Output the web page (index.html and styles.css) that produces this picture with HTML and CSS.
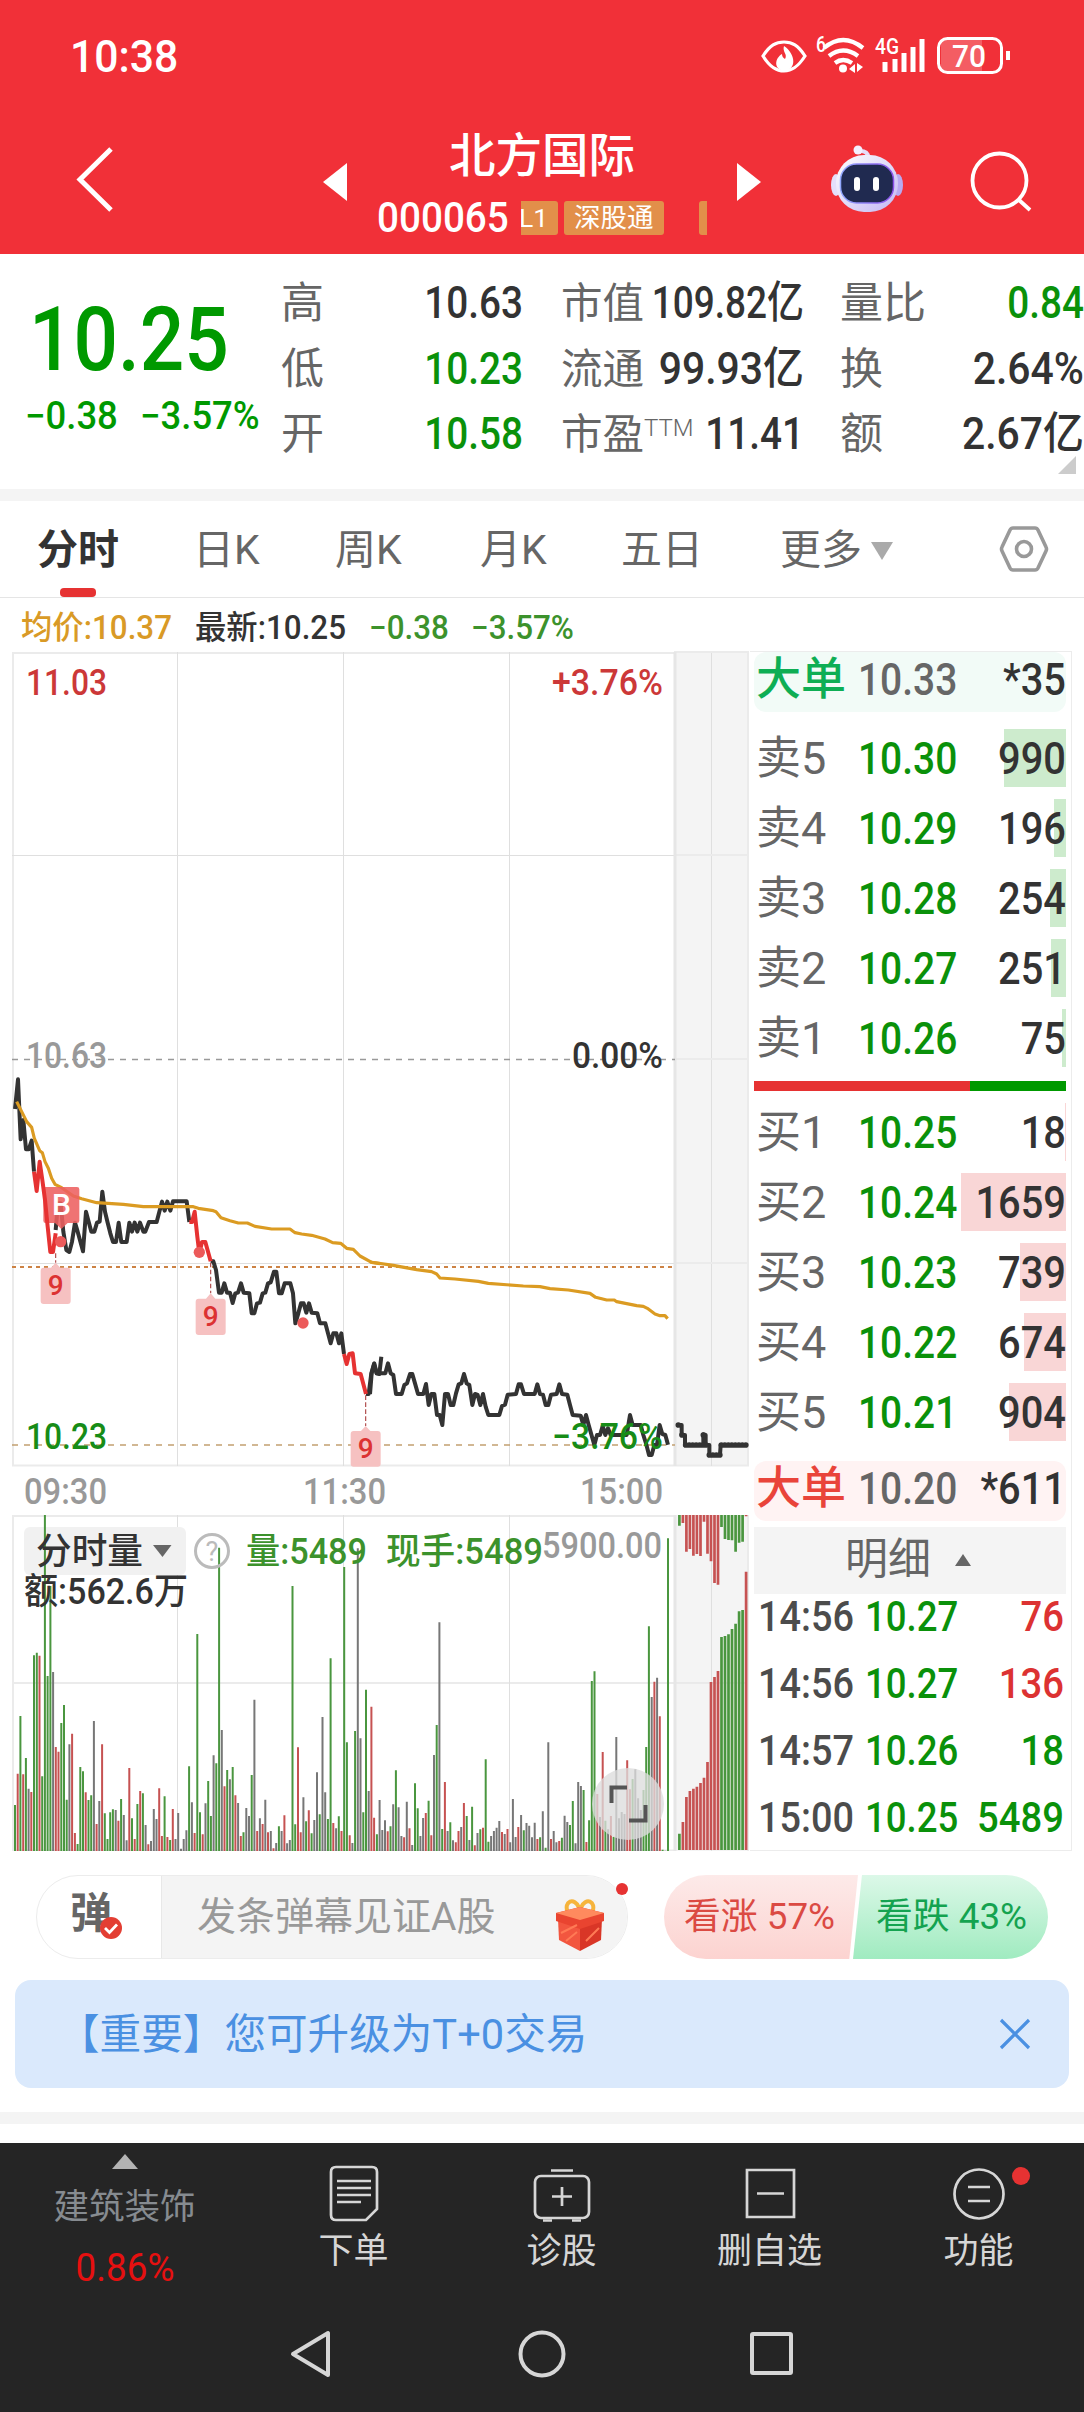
FILE: index.html
```html
<!DOCTYPE html>
<html lang="zh-CN">
<head>
<meta charset="utf-8">
<title>北方国际 000065</title>
<link rel="stylesheet" href="styles.css">
</head>
<body>
<header class="top">
  <div class="status">
    <span class="clock n">10:38</span>
    <svg class="status-icons" width="252" height="48" viewBox="760 32 252 48">
      <path d="M763 56C770 45 776 42 784 42s14 3 21 14c-7 11-13 15-21 15s-14-4-21-15z" fill="none" stroke="#fff" stroke-width="3.2"/>
      <path d="M784 46c-2 6 4 8 1 13-2-1-3-3-3-5-7 4-9 15 2 17 13-1 12-17 0-25z" fill="#fff"/>
      <text x="816" y="52" class="s-small" textLength="10" lengthAdjust="spacingAndGlyphs">6</text>
      <g fill="none" stroke="#fff" stroke-width="4.2"><path d="M824 48q19-16 39 0"/><path d="M829 56q14-11 29 0"/><path d="M835 63q8-6 17 0"/></g>
      <circle cx="843" cy="68.500" r="4" fill="#fff"/><path d="M855 64v9l-6-4zM857 63v9l6-5z" fill="#fff"/>
      <text x="875" y="54" class="s-small" textLength="24" lengthAdjust="spacingAndGlyphs">4G</text>
      <path d="M885 62v10M895 59v13M904 53v19M913 47v25M922 39v33" stroke="#fff" stroke-width="5"/>
      <rect x="941" y="40" width="41" height="31" fill="#fff" opacity=".22"/>
      <rect x="938.500" y="38.500" width="63" height="34" rx="9" fill="none" stroke="#fff" stroke-width="3"/>
      <path d="M1008 51v9" stroke="#fff" stroke-width="4"/>
      <text x="952" y="67" class="s-batt" textLength="34" lengthAdjust="spacingAndGlyphs">70</text>
    </svg>
  </div>
  <div class="titlebar">
    <svg class="back" width="48" height="80" viewBox="70 140 48 80"><path d="M111 149 80 179.500 111 210" fill="none" stroke="#fff" stroke-width="5"/></svg>
    <svg class="prev" width="24" height="38" viewBox="0 0 24 38"><path d="M0 19 24 0V38z" fill="#fff"/></svg>
    <div class="stock">
      <h1>北方国际</h1>
      <div class="code"><span class="n codenum">000065</span><span class="tags"><i class="tag cut">L1</i><i class="tag">深股通</i><i class="tag last"></i></span></div>
    </div>
    <svg class="next" width="24" height="38" viewBox="0 0 24 38"><path d="M24 19 0 0V38z" fill="#fff"/></svg>
    <svg class="robot" width="76" height="70" viewBox="827 144 76 70">
      <defs><linearGradient id="shell" x2="1" y2="1"><stop stop-color="#fff"/><stop offset="1" stop-color="#c3b8f3"/></linearGradient><linearGradient id="rim"><stop stop-color="#92a9ff"/><stop offset="1" stop-color="#8b51e9"/></linearGradient></defs>
      <path d="M866 157q0-6-8-6" fill="none" stroke="#e6ddfa" stroke-width="4"/><circle cx="856" cy="150" r="4.500" fill="#f4f0ff"/>
      <ellipse cx="834" cy="185" rx="5" ry="11" fill="#e4dffb"/><ellipse cx="896" cy="185" rx="5" ry="11" fill="#b8aaf0"/>
      <rect x="834" y="155" width="62" height="57" rx="28" fill="url(#shell)"/>
      <rect x="838.500" y="164" width="53" height="39" rx="16" fill="#202a50" stroke="url(#rim)" stroke-width="1.500"/>
      <rect x="852" y="177" width="6" height="14" rx="3" fill="#fff"/><rect x="871" y="177" width="6" height="14" rx="3" fill="#fff"/>
    </svg>
    <svg class="search" width="66" height="66" viewBox="967 148 66 66"><g fill="none" stroke="#fff" stroke-width="3.800"><circle cx="998.500" cy="180.500" r="27"/><path d="m1018 200 11 10"/></g></svg>
  </div>
</header>

<section class="summary">
  <div class="quote">
    <div class="last n">10.25</div>
    <div class="chg"><span class="n">−0.38</span><span class="n">−3.57%</span></div>
  </div>
  <dl class="facts">
    <dt>高</dt><dd>10.63</dd><dt class="c2">市值</dt><dd class="w7">109.82<b>亿</b></dd><dt>量比</dt><dd class="down">0.84</dd>
    <dt>低</dt><dd class="down">10.23</dd><dt class="c2">流通</dt><dd class="w6">99.93<b>亿</b></dd><dt>换</dt><dd class="w6">2.64%</dd>
    <dt>开</dt><dd class="down">10.58</dd><dt class="c2">市盈<sup>TTM</sup></dt><dd>11.41</dd><dt>额</dt><dd class="w6">2.67<b>亿</b></dd>
  </dl>
  <i class="corner"></i>
</section>

<nav class="tabs">
  <span class="on">分时</span><span>日K</span><span>周K</span><span>月K</span><span>五日</span><span class="more">更多<i></i></span>
  <svg width="50" height="50" viewBox="0 0 50 50"><path d="M14 4h22q2 0 3 2l8 17q1 2 0 4l-8 17q-1 2-3 2H14q-2 0-3-2L3 27q-1-2 0-4L11 6q1-2 3-2z" fill="none" stroke="#999" stroke-width="3.600"/><circle cx="25" cy="25" r="7.500" fill="none" stroke="#999" stroke-width="3.600"/></svg>
</nav>
<div class="legend"><span class="avg">均价:10.37</span><span class="now">最新:10.25</span><span class="d1">−0.38</span><span class="d2">−3.57%</span></div>

<main class="market">
  <svg class="chart" width="750" height="1200" viewBox="0 651 750 1200">
    <rect x="675" y="652" width="74" height="814" fill="#f4f4f4"/><rect x="675" y="1515" width="74" height="336" fill="#f4f4f4"/>
    <g class="grid">
      <path d="M12 653H675M12 1465.500H749M12 1516H675M12 1683H675M12 1850.500H675M13 652V1466M13 1515V1851"/>
      <path class="thin" d="M12 855.500H675M12 1263.500H675M177.500 652V1466M343.500 652V1466M509.500 652V1466M177.500 1515V1851M343.500 1515V1851M509.500 1515V1851M711.500 652V1466M711.500 1515V1851M675 1683H749"/>
      <path d="M674 652H749M675 855H749M675 1059H749M675 1263H749M748 652V1466M748 1515V1851"/>
      <path class="edge" d="M675 652V1466M675 1515V1851"/>
    </g>
    <path class="zero" d="M12 1059.500H675"/><path class="cost" d="M12 1267H675"/><path class="floor" d="M12 1445H675"/>
    <text class="lab up" x="26" y="695" textLength="81">11.03</text>
    <text class="lab up" x="552" y="695" textLength="111">+3.76%</text>
    <text class="lab mute" x="26" y="1068" textLength="81">10.63</text>
    <text class="lab dark" x="572" y="1068" textLength="91">0.00%</text>
    <g transform="translate(0 1040) scale(.33333)">
      <polyline class="price" points="45,207 54,118 62,298 70,240 78,328 86,328 95,302 102,395"/>
      <polyline class="price" points="167,570 174,490 182,490 190,575 199,630 208,636 216,605 225,548 233,575 249,634 258,515 266,545 274,575 283,575 291,548 299,545 307,455 315,515 323,548 331,580 339,606 348,606 356,548 364,606 380,606 388,548 396,575 404,548 412,575 420,548 430,575 436,575 447,546 470,546 478,515 486,485 494,512 502,485 511,512 519,484 560,484 568,546"/>
      <polyline class="price" points="632,664 640,664 648,690 657,758 665,758 673,730 681,758 690,758 698,789 706,760 714,758 723,730 731,758 748,760 755,820 763,820 771,790 780,788 788,760 796,758 804,730 812,727 822,695 829,695 837,760 845,760 854,730 871,730 879,760 886,850 895,820 903,790 911,790 919,818 927,790 935,818 952,820 960,850 976,850 984,880 992,910 1000,880 1009,880 1017,910 1024,880 1032,942"/>
      <polyline class="price" points="1098,1062 1106,1062 1114,1000 1122,972 1130,1000 1138,1002 1144,950"/>
      <polyline class="average" points="50,185 65,215 80,245 95,262 103,295 119,332 127,338 135,365 145,385 155,415 165,433 185,443 220,468 245,476 290,488 370,493 430,500 580,500 595,505 640,512 648,515 663,533 690,542 715,549 742,549 765,559 815,567 870,567 885,578 905,582 935,586 975,597 998,608 1022,610 1040,625 1060,628 1080,648 1115,667 1140,671"/>
      <path class="buy" d="M137 441H231q7 0 7 7V542q0 7-7 7H203L184 567 165 549H137q-7 0-7-7V448q0-7 7-7z"/>
      <polyline class="price hot" points="102,395 110,453 119,365 127,420 135,480 143,560 151,636 159,636 167,580"/>
      <polyline class="price hot" points="568,546 576,546 584,515 592,590 598,640 606,606 616,606 632,664"/>
      <polyline class="price hot" points="1032,942 1040,972 1048,942 1058,940 1065,1000 1082,1002 1098,1062"/>
      <g fill="#ec5a5a"><circle cx="182" cy="605" r="17"/><circle cx="598" cy="637" r="17"/><circle cx="909" cy="849" r="17"/></g>
      <path class="drop" d="M167 640V668M632 668V760M1097 1066V1158"/>
      <g class="flag"><path d="M131 683H153L167 668 181 683H203q9 0 9 9V783q0 9-9 9H131q-9 0-9-9V692q0-9 9-9z"/><path d="M596 776H618L632 760 646 776H668q9 0 9 9V876q0 9-9 9H596q-9 0-9-9V785q0-9 9-9z"/><path d="M1061 1173H1083L1097 1158 1111 1173H1133q9 0 9 9V1271q0 9-9 9H1061q-9 0-9-9V1182q0-9 9-9z"/></g>
    </g>
    <g transform="translate(370 1150) scale(.33333)">
      <polyline class="price" points="0,732 5,670 13,640 20,670 46,670 54,640 62,670 70,675 78,732 95,732 103,705 111,700 120,672 127,672 135,700 144,732 160,732 168,702 176,765 184,732 193,732 201,795 209,795 217,825 225,732 234,732 242,765 250,765 258,730 266,703 274,700 282,672 290,700 298,705 307,765 315,732 323,735 331,765 339,732 347,770 355,795 388,795 396,768 405,764 413,734 438,732 446,703 453,703 462,732 494,732 502,703 510,732 519,734 527,765 535,765 543,734 560,732 568,703 576,732 592,734 600,765 608,795 632,797 640,825 648,795 656,825 673,885 681,855 690,855 698,828 706,855 714,835 722,855 770,855 780,795 788,825 812,825 820,855 828,880 837,915 845,915 853,885 861,885 869,825 877,852 886,855 894,884"/>
      <polyline class="average" points="0,336 70,346 90,350 140,359 185,365 200,372 210,384 255,387 325,394 355,400 460,408 510,410 540,416 595,420 660,430 677,442 710,450 733,450 740,455 800,467 820,469 832,475 855,492 870,497 885,497 893,506"/>
      <polyline class="price" points="925,825 935,825 935,855 945,855 945,885 1000,885 1000,853 1007,855 1007,885 1018,885 1018,915 1050,915 1052,885 1133,885"/>
      <path class="dots" d="M925 825h5M936 855h5M947 885h55M1000 855h5M1008 885h5M1018 915h34M1054 885h78"/>
    </g>
    <text class="flagn" x="55.700" y="1295">9</text><text class="flagn" x="210.700" y="1326">9</text><text class="flagn" x="365.700" y="1458">9</text>
    <text class="buyn" x="61.500" y="1215">B</text>
    <text class="lab down" x="26" y="1448.500" textLength="81">10.23</text>
    <text class="lab down" x="552" y="1448.500" textLength="111">−3.76%</text>
    <g class="axis"><text class="lab mute" x="24" y="1504" textLength="83">09:30</text><text class="lab mute" x="303" y="1504" textLength="83">11:30</text><text class="lab mute" x="580" y="1504" textLength="83">15:00</text></g>
    <rect x="24" y="1527" width="162" height="48" rx="6" fill="#f1f1f1"/>
    <g class="vol"></g>
    <text class="lab dark cjk" x="36" y="1564" textLength="107">分时量</text><path d="M153 1545h18.500l-9 12z" fill="#666"/>
    <circle cx="212" cy="1551" r="16.500" fill="none" stroke="#bbb" stroke-width="3"/><text class="ask" x="212" y="1561">?</text>
    <text class="lab leaf" x="246" y="1564" textLength="121">量:5489</text><text class="lab leaf" x="386" y="1564" textLength="157">现手:5489</text>
    <text class="lab mute" x="542" y="1558" textLength="120">5900.00</text>
    <text class="lab dark" x="24" y="1604" textLength="164">额:562.6万</text>
    <circle cx="628" cy="1804" r="36" fill="#dcdcdc" fill-opacity=".78"/>
    <path d="M611.500 1803V1787.500H627M645.500 1805V1820.500H629" fill="none" stroke="#555" stroke-width="4"/>
  </svg>

  <aside class="book">
    <div class="big green"><span>大单</span><em>10.33</em><strong>*35</strong></div>
    <div class="levels">
      <div class="lv"><span>卖5</span><em>10.30</em><strong>990</strong><i style="width:62px"></i></div>
      <div class="lv"><span>卖4</span><em>10.29</em><strong>196</strong><i style="width:12px"></i></div>
      <div class="lv"><span>卖3</span><em>10.28</em><strong>254</strong><i style="width:16px"></i></div>
      <div class="lv"><span>卖2</span><em>10.27</em><strong>251</strong><i style="width:15px"></i></div>
      <div class="lv"><span>卖1</span><em>10.26</em><strong>75</strong><i style="width:4px"></i></div>
    </div>
    <div class="ratio"></div>
    <div class="levels bid">
      <div class="lv"><span>买1</span><em>10.25</em><strong>18</strong><i style="width:1px"></i></div>
      <div class="lv"><span>买2</span><em>10.24</em><strong>1659</strong><i style="width:105px"></i></div>
      <div class="lv"><span>买3</span><em>10.23</em><strong>739</strong><i style="width:46px"></i></div>
      <div class="lv"><span>买4</span><em>10.22</em><strong>674</strong><i style="width:42px"></i></div>
      <div class="lv"><span>买5</span><em>10.21</em><strong>904</strong><i style="width:57px"></i></div>
    </div>
    <div class="big red"><span>大单</span><em>10.20</em><strong>*611</strong></div>
    <div class="detail">明细<i></i></div>
    <div class="ticks">
      <div><span>14:56</span><em>10.27</em><strong class="up">76</strong></div>
      <div><span>14:56</span><em>10.27</em><strong class="up">136</strong></div>
      <div><span>14:57</span><em>10.26</em><strong>18</strong></div>
      <div><span>15:00</span><em>10.25</em><strong>5489</strong></div>
    </div>
  </aside>
</main>

<section class="social">
  <div class="danmu">
    <div class="toggle">弹<svg width="24" height="24" viewBox="0 0 24 24"><circle cx="12" cy="12" r="11" fill="#e33e33"/><path d="m6 12 4.500 4.500L18 8.500" fill="none" stroke="#fff" stroke-width="2.800"/></svg></div>
    <div class="field"><span>发条弹幕见证A股</span>
      <svg class="gift" width="52" height="54" viewBox="554 1899 52 54">
        <g fill="none" stroke="#f6b43c" stroke-width="4"><ellipse cx="573" cy="1909" rx="6" ry="8" transform="rotate(-22 573 1909)"/><ellipse cx="587" cy="1909" rx="6" ry="8" transform="rotate(22 587 1909)"/></g>
        <path d="M558 1919 580 1928V1951L559 1940z" fill="#f2563f"/><path d="M602 1919 580 1928V1951L601 1940z" fill="#d93627"/>
        <path d="M556 1913 580 1907 604 1913V1921L580 1929 556 1921z" fill="#e94430"/><path d="m556 1913 24-6 24 6-24 7z" fill="#ff8a5e"/><path d="m561 1933 16-8M566 1941l11-9M586 1941l13-13" stroke="#ff7a55" stroke-width="2"/>
      </svg>
    </div>
    <i class="reddot"></i>
  </div>
  <div class="vote"><span class="bull">看涨 57%</span><span class="bear">看跌 43%</span></div>
</section>

<section class="notice"><span>【重要】您可升级为T+0交易</span><svg width="32" height="32" viewBox="0 0 32 32"><path d="m2 2 28 28M30 2 2 30" stroke="#4a90e2" stroke-width="3.200"/></svg></section>
<div class="strip"></div>

<footer class="bottom">
  <div class="menu">
    <div class="sector"><i></i><span>建筑装饰</span><b class="n">0.86%</b></div>
    <div class="item"><svg width="60" height="60" viewBox="0 0 60 60"><path d="M12 4H48q5 0 5 5V46L42 57H12q-5 0-5-5V9q0-5 5-5zM13 18H47M13 25H47M13 32H47M13 39H37"/></svg>下单</div>
    <div class="item"><svg width="60" height="60" viewBox="0 0 60 60"><rect x="3" y="13" width="54" height="42" rx="6"/><path d="M19 7.500H41M30 24V43M20 33.500H40M11 57.500H20M40 57.500H49"/></svg>诊股</div>
    <div class="item"><svg width="60" height="60" viewBox="0 0 60 60"><path d="M7 7H54V54H7zM17 30.500H44"/></svg>删自选</div>
    <div class="item"><svg width="60" height="60" viewBox="0 0 60 60"><circle cx="30" cy="31" r="24.500"/><path d="M19 24H41M19 38H41"/></svg>功能<i class="reddot"></i></div>
  </div>
  <div class="system">
    <svg width="46" height="50" viewBox="0 0 46 50"><path d="M42 4V46L7 25z" stroke-linejoin="round"/></svg>
    <svg width="50" height="50" viewBox="0 0 50 50"><circle cx="25" cy="25" r="21.500"/></svg>
    <svg width="46" height="50" viewBox="0 0 46 50"><rect x="5" y="5" width="39" height="39" rx="1"/></svg>
  </div>
</footer>
<script src="chart.js"></script>
</body>
</html>
```
FILE: styles.css
```css
* { box-sizing: border-box; }
body { margin: 0; width: 1084px; height: 2412px; overflow: hidden; background: #fff; color: #333; font-family: Roboto, "Noto Sans CJK SC", sans-serif; }
h1, dl, dd, dt { margin: 0; }
i, em { font-style: normal; }
svg { display: block; flex: none; }
.n { display: inline-block; transform: scaleX(.9); transform-origin: 0 50%; font-weight: 500; white-space: nowrap; }

.top { height: 254px; background: #f13038; color: #fff; }
.status { height: 110px; padding: 32px 72px 0 70px; display: flex; justify-content: space-between; align-items: flex-start; }
.clock { font-size: 44px; line-height: 51px; transform: scaleX(.97); }
.s-small { font: 500 22px Roboto; fill: #fff; }
.s-batt { font: 500 31px Roboto; fill: #fff; }
.titlebar { height: 144px; display: grid; grid-template-columns: 253px 24px 390px 24px 68px 76px 63px 66px; padding-left: 70px; }
.back { margin-top: 30px; }
.prev, .next { margin-top: 53px; }
.robot { margin-top: 34px; }
.search { margin-top: 38px; }
.next { grid-column: 4; }
.robot { grid-column: 6; }
.search { grid-column: 8; }
.stock { display: flex; flex-direction: column; align-items: center; }
h1 { font-size: 46.500px; font-weight: 500; line-height: 60px; margin-top: 16px; white-space: nowrap; }
.code { width: 330px; height: 40px; margin-top: 12px; display: flex; align-items: center; }
.codenum { font-size: 42px; line-height: 42px; width: 144px; transform: scaleX(.92); }
.tags { width: 186px; height: 34px; display: flex; gap: 6px; overflow: hidden; }
.tag { background: #e28f4a; color: #fff; font-size: 26.500px; line-height: 34px; padding: 0 10px; border-radius: 3px; flex: none; height: 34px; }
.cut { width: 37px; padding: 0; text-indent: -2px; border-radius: 0 3px 3px 0; }
.last.tag { margin-left: 29px; width: 20px; }

.summary { height: 247px; border-bottom: 12px solid #f4f4f4; display: flex; position: relative; }
.quote { width: 281px; padding-left: 29px; color: #090; flex: none; }
.quote .last { font-size: 89px; line-height: 100px; margin-top: 36px; transform: scaleX(.88); }
.chg { display: flex; margin: 1px 0 0 -4px; font-size: 38px; line-height: 50px; }
.chg span { width: 115px; transform: scaleX(.96); }
.facts { display: grid; grid-template-columns: 94px 148px 38px 84px 159px 36px 100px 144px; grid-auto-rows: 65.500px; margin-top: 17px; font-size: 43px; line-height: 65px; white-space: nowrap; width: 803px; flex: none; }
.facts dt { color: #666; }
.facts dt:nth-of-type(3n+2) { grid-column: 4; }
.facts dt:nth-of-type(3n) { grid-column: 7; }
.facts dd { text-align: right; font-weight: 500; transform: scaleX(.88); transform-origin: 100% 50%; font-size: 44px; color: #333; }
.facts dd b { font-weight: 500; }
.facts .w7 { transform: scaleX(.84); display: flex; justify-content: flex-end; }
.facts .w6 { transform: scaleX(.93); display: flex; justify-content: flex-end; }
.facts .down { color: #0a910a; }
.facts .c2 { font-size: 41.500px; }
sup { font-size: 24px; font-weight: 300; line-height: 0; vertical-align: 13px; }
.corner { position: absolute; left: 1058px; top: 202px; border: 9px solid; border-color: transparent #ccc #ccc transparent; }

.tabs { height: 97px; border-bottom: 1.500px solid #e5e5e5; position: relative; display: grid; grid-template-columns: 156px 142px 145px 141px 159px 220px 50px; padding: 2px 0 0 37px; align-items: center; font-size: 41px; line-height: 60px; color: #666; white-space: nowrap; }
.tabs .on { color: #333; font-weight: 700; position: relative; }
.tabs .on::after { content: ""; position: absolute; left: 23px; top: 68px; width: 36px; height: 9px; border-radius: 4px; background: #e63232; }
.more i { display: inline-block; border: 11px solid transparent; border-top: 18px solid #aaa; border-bottom: 0; margin-left: 9px; vertical-align: 4px; }
.tabs svg { margin: -2px 0 0 -1px; }
.legend { height: 53px; display: grid; grid-template-columns: 174px 174px 102px 120px; padding-left: 21px; font-size: 32.500px; line-height: 60px; white-space: nowrap; }
.legend span { transform: scaleX(.965); transform-origin: 0 50%; font-weight: 500; }
.avg { color: #d99a26; } .now { color: #333; } .d1, .d2 { color: #3c922c; }

.market { display: flex; height: 1200px; }
.chart { width: 750px; }
.grid path { fill: none; stroke: #ebebeb; stroke-width: 2; }
.grid .thin { stroke: #dfdfdf; stroke-width: 1; }
.grid .edge { stroke: #e6e6e6; stroke-width: 3; }
.zero { stroke: #999; stroke-width: 1.700; stroke-dasharray: 6 6; }
.cost { stroke: #cc8244; stroke-width: 2; stroke-dasharray: 4 4; }
.floor { stroke: #c2a070; stroke-width: 1.700; stroke-dasharray: 6 6; }
.price { fill: none; stroke: #333; stroke-width: 12; stroke-linejoin: round; stroke-linecap: butt; }
.hot { stroke: #e63232; }
.average { fill: none; stroke: #db9b22; stroke-width: 9.500; stroke-linejoin: round; }
.dots { stroke: #333; stroke-width: 17; stroke-linecap: round; stroke-dasharray: 0 10.500; fill: none; }
.buy { fill: #ed6060; fill-opacity: .88; }
.drop { stroke: #b04a4a; stroke-width: 3.500; stroke-dasharray: 14 7; fill: none; }
.flag { fill: #f6c1c1; }
.flagn { font: 500 28px Roboto; fill: #dc3232; text-anchor: middle; }
.buyn { font: 500 30px Roboto; fill: #fff; text-anchor: middle; }
.lab { font: 500 36.500px Roboto, "Noto Sans CJK SC", sans-serif; }
text.up { fill: #cc3838; } text.down { fill: #178c17; } text.mute { fill: #999; } text.dark { fill: #333; } text.leaf { fill: #3c922c; }
.ask { font: 400 27px Roboto; fill: #bbb; text-anchor: middle; }
.vol path { fill: none; stroke-width: 2; }
.vol .g { stroke: #4a963f; } .vol .r { stroke: #c65252; } .vol .k { stroke: #777; }
.vol .wide { stroke-width: 2.700; }

.book { width: 322px; border: 1px solid #ececec; border-left: 0; padding: 0 5px 0 4px; white-space: nowrap; }
.big { height: 60px; border-radius: 12px; display: grid; grid-template-columns: 104px 96px 112px; font-size: 45px; line-height: 55px; }
.big span { color: #0eae54; font-weight: 500; padding-left: 2px; }
.big.green { background: #f2fbf7; }
.big.red { background: #fff3f3; margin-top: 20px; line-height: 56px; }
.big.red span { color: #e9443a; }
.big em, .lv em { transform: scaleX(.865); transform-origin: 0 50%; }
.big em { color: #666; font-weight: 500; }
.big strong, .lv strong { text-align: right; font-weight: 500; transform: scaleX(.885); transform-origin: 100% 50%; color: #333; }
.levels { padding-top: 17px; display: grid; gap: 12px; }
.lv { height: 58px; position: relative; display: grid; grid-template-columns: 104px 96px 112px; align-items: center; font-size: 45px; line-height: 57px; }
.lv span { color: #666; padding-left: 2px; }
.lv em { color: #0a910a; font-weight: 500; }
.lv strong { z-index: 1; }
.lv i { position: absolute; right: 0; top: 0; height: 58px; background: #cdebcd; }
.bid .lv i { background: #f9d6d6; }
.bid { padding-top: 12px; }
.ratio { height: 10px; margin-top: 14px; background: linear-gradient(90deg, #e63232 216px, #090 216px); }
.detail { height: 67px; margin-top: 6px; background: #f4f4f4; color: #666; font-size: 43px; line-height: 64px; display: flex; align-items: flex-start; padding-left: 91px; gap: 24px; }
.detail i { border: 8.500px solid transparent; border-bottom: 12px solid #666; border-top: 0; margin-top: 27px; }
.ticks { margin-top: -8px; }
.ticks div { height: 67px; line-height: 61px; font-size: 42px; display: grid; grid-template-columns: 106px 96px 103px; padding-left: 5px; }
.ticks span { color: #4c4c4c; transform: scaleX(.9); transform-origin: 0 50%; font-weight: 500; margin-left: -1px; }
.ticks em { color: #0a910a; font-weight: 500; transform: scaleX(.87); transform-origin: 0 50%; }
.ticks strong { color: #0a910a; font-weight: 500; text-align: right; transform: scaleX(.91); transform-origin: 100% 50%; }
.ticks strong.up { color: #dc3232; }

.social { height: 129px; padding: 24px 36px 0; display: flex; }
.danmu { width: 592px; height: 84px; border: 1.500px solid #ececec; border-radius: 42px; display: flex; position: relative; }
.toggle { width: 124px; padding-left: 33px; font-size: 42px; font-weight: 700; line-height: 75px; color: #666; position: relative; }
.toggle svg { position: absolute; left: 62px; top: 40px; }
.field { flex: 1; background: #f4f4f4; border-left: 1px solid #e8e8e8; border-radius: 0 42px 42px 0; display: flex; font-size: 39px; line-height: 83px; color: #999; padding-left: 35px; }
.field span { width: 357px; white-space: nowrap; }
.gift { margin-top: 23px; }
.reddot { position: absolute; border-radius: 50%; background: #e63232; width: 12px; height: 12px; }
.danmu .reddot { left: 579px; top: 7px; }
.vote { width: 384px; height: 84px; margin-left: 36px; display: flex; border-radius: 42px; overflow: hidden; font-size: 36.800px; line-height: 84px; white-space: nowrap; }
.bull { width: 194px; padding-left: 20px; color: #db4a43; background: linear-gradient(#fdeae9, #fcd3d0); clip-path: polygon(0 0, 100% 0, 95.500% 100%, 0 100%); }
.bear { width: 195px; margin-left: -5px; padding-left: 23px; color: #14a350; background: linear-gradient(#dcf8e8, #a0ebc0); clip-path: polygon(4.600% 0, 100% 0, 100% 100%, 0 100%); }
.notice { margin: 0 15px; height: 108px; border-radius: 16px; background: #dae9fc; color: #4a90e2; font-size: 41.600px; line-height: 109px; padding: 0 38px 0 43px; display: flex; justify-content: space-between; align-items: center; }
.notice span { height: 108px; }
.strip { height: 12px; margin: 24px 0 19px; background: #f4f4f4; }

.bottom { height: 269px; background: #252525; color: #d6d6d6; }
.menu { height: 150px; display: grid; grid-template-columns: 249px 209px 207px 209px 209px; font-size: 35px; }
.sector { display: flex; flex-direction: column; align-items: center; color: #868b90; }
.sector i { margin-top: 11px; border: 13px solid transparent; border-top: 0; border-bottom: 15px solid #b3b3b3; }
.sector span { line-height: 50px; margin-top: 13px; font-size: 35.500px; }
.sector b { margin-top: 11px; line-height: 50px; color: #e61010; font-size: 38px; font-weight: 400; transform-origin: 50%; transform: scaleX(.97); }
.item { display: flex; flex-direction: column; align-items: center; padding-top: 20px; line-height: 58px; position: relative; }
.item svg, .system svg { fill: none; stroke: #d6d6d6; stroke-width: 2.700; }
.item .reddot { left: 138px; top: 24px; width: 18px; height: 18px; }
.system { height: 119px; padding: 36px 0 0 286px; display: grid; grid-template-columns: 231px 230px 46px; }
.system svg { stroke-width: 4; }
```
FILE: chart.js
```js
// Minute volume: g = falling, r = rising, k = flat; number is the bar top in thirds of a pixel.
const minutes = `g915 r821 g648 r823 g774 k866 r876 g466 g458 r467 g829 g45 g528 g258 k516 r741 r755 g669 g615 g899
k733 r701 r999 g1032 g801 g814 r877 g900 g886 k663 r972 k903 r733 g940 g1017 g937 g928 k930 r962 g897
k945 k1021 r804 g955 r1017 g912 r873 g880 k975 r1033 k1023 k927 k957 r865 r1008 g889 r1011 g1020 r927 k1017
k939 k1046 k1017 k991 g799 k907 r999 g402 g937 r1003 k910 g843 g948 k766 g790 g143 k690 r859 g810 k838
g801 r886 k909 r1008 g997 k924 k948 g825 k599 r993 k955 r972 k899 r997 k993 r1045 k1029 g979 k993 r946
k1030 k1020 g258 g973 r742 r997 k892 g964 r931 g1000 k960 k817 g943 k651 k877 g957 g475 r969 k985 g949
r993 g201 g727 r1006 k1029 g693 k145 k715 g937 g569 k873 r620 r953 g1003 k900
k990 k961 r994 g979 k913 g811 k922 k1008 r1012 k905 r985 k1035 g850 g925 k1008 k954 r939 g902 r1006 k765
g675 k367 g987 r846 k993 g967 k1021 r1027 r993 k981 r909 g948 k1020 g920 r1036 k999 g988 r983 g778 g1025
k1008 k993 k983 k963 r996 k1002 r987 k1027 k897 k1011 r981 k945 g991 k969 k977 k1012 k968 r1017 g1012 k934
g1043 k727 r1017 k993 k1027 r1023 g1013 k947 k966 g975 g903 k1030 k846 k858 g870 r1026 g961 g543 g514 r882
k951 r756 g962 k988 r948 g1010 k711 k955 k936 k942 r781 r868 g837 k808 k895 k930 g870 g741 g379 k591
r545 k533 r649 g1049 k1052 g115`.split(/\s+/);
// Closing auction: colour, matched volume top, unmatched volume bottom.
const auction = [['g',1001,77],['r',966,69],['r',891,155],['r',873,147],['r',866,167],['r',860,162],['r',849,168],['r',833,65],
  ['r',786,161],['r',546,184],['r',531,249],['r',513,254],['g',411,81],['g',408,117],['g',403,120],['g',387,121],
  ['g',371,155],['g',334,128],['g',330,125],['r',215,49]];
const vol = document.querySelector('.vol');
const d = { g: '', r: '', k: '' };
minutes.forEach((m, i) => {
  d[m[0]] += `M${(15 + i * 2.7208).toFixed(1)} 1851V${(1500 + m.slice(1) / 3).toFixed(1)}`;
});
const wide = { g: '', r: '' };
auction.forEach(([c, top, hang], i) => {
  const x = (679.4 + i * 3.51).toFixed(1);
  wide[c] += `M${x} 1850V${(1500 + top / 3).toFixed(1)}M${x} 1515V${(1500 + hang / 3).toFixed(1)}`;
});
const add = (cls, path) => {
  const p = document.createElementNS('http://www.w3.org/2000/svg', 'path');
  p.setAttribute('class', cls);
  p.setAttribute('d', path);
  vol.append(p);
};
for (const c in d) add(c, d[c]);
for (const c in wide) add(c + ' wide', wide[c]);
document.querySelectorAll('.lab').forEach(t => t.setAttribute('lengthAdjust', 'spacingAndGlyphs'));
```
